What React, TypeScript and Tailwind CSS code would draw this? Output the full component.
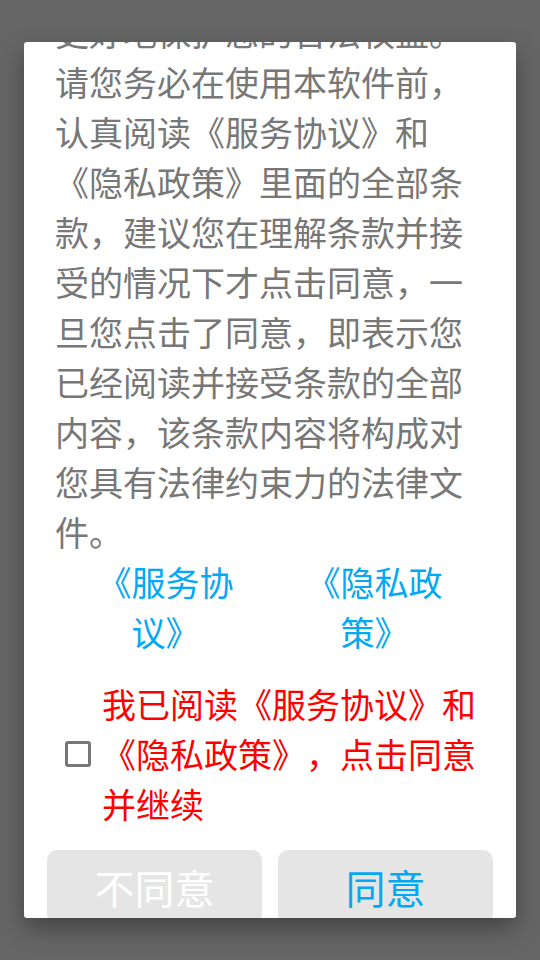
import { useState } from 'react';

export default function App() {
  const [checked, setChecked] = useState(false);

  return (
    <div className="flex h-[960px] items-center justify-center bg-[#666666] font-['Noto_Sans_CJK_SC','Noto_Sans',sans-serif] [text-spacing-trim:space-all]">
      <div className="h-[876px] w-[492px] overflow-hidden rounded-[3px] bg-white shadow-[0_10px_24px_rgba(0,0,0,0.35)]">
        {/* scrolled content: the top of the agreement is already out of view */}
        <div className="-mt-[35px]">
          <p className="px-[31px] text-[34px] leading-[50px] text-[#777777]">
            更好地保护您的合法权益。请您务必在使用本软件前，认真阅读《服务协议》和《隐私政策》里面的全部条款，建议您在理解条款并接受的情况下才点击同意，一旦您点击了同意，即表示您已经阅读并接受条款的全部内容，该条款内容将构成对您具有法律约束力的法律文件。
          </p>

          <div className="flex justify-center gap-[59px] text-center text-[34px] leading-[50px] text-[#03a9f4]">
            <a className="w-[150px]">《服务协议》</a>
            <a className="w-[150px]">《隐私政策》</a>
          </div>

          <label
            className="mt-[22px] flex items-center pl-[41px] pr-[31px]"
            onClick={() => setChecked(!checked)}
          >
            <span className="flex h-[26px] w-[26px] shrink-0 items-center justify-center rounded-[3px] border-[3px] border-[#777777]">
              {checked && <span className="h-[12px] w-[12px] bg-[#777777]" />}
            </span>
            <span className="ml-[11px] flex-1 text-[34px] leading-[50px] text-[#ff0000]">
              我已阅读《服务协议》和《隐私政策》，点击同意并继续
            </span>
          </label>

          <div className="mt-[21px] flex gap-4 px-[23px]">
            <button className="flex h-[74px] flex-1 items-center justify-center rounded-[10px] bg-[#e5e5e5] text-[40px] text-white">
              不同意
            </button>
            <button className="flex h-[74px] flex-1 items-center justify-center rounded-[10px] bg-[#e5e5e5] text-[40px] text-[#03a9f4]">
              同意
            </button>
          </div>
        </div>
      </div>
    </div>
  );
}
